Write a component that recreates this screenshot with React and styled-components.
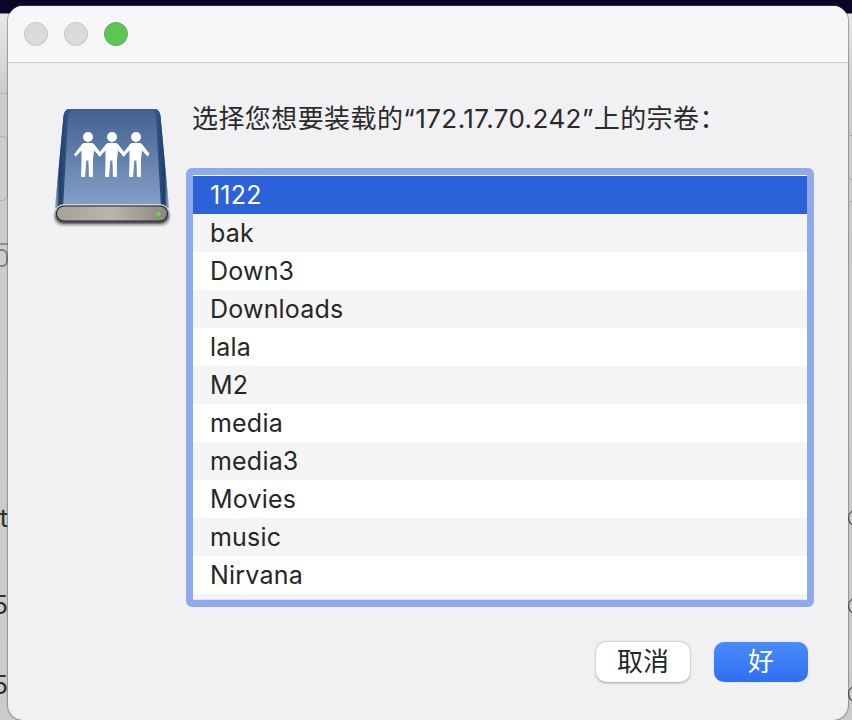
import React from 'react';
import styled, { createGlobalStyle } from 'styled-components';

const Global = createGlobalStyle`
  html, body { margin: 0; padding: 0; background: #cfcfcf; }
  * { box-sizing: border-box; }
`;

const Desktop = styled.div`
  width: 852px;
  height: 720px;
  overflow: hidden;
  display: flex;
  font-family: "Inter", "Noto Sans CJK SC", sans-serif;
  background: linear-gradient(180deg, #0a0628 0, #0a0628 13px, #e8e8e8 14px, #cdcdcd 90px, #cbcbcb 720px);
`;

const Strip = styled.aside`
  width: ${p => p.$w}px;
  flex: none;
  height: 720px;
  overflow: hidden;
  display: flex;
  flex-direction: column;
  align-items: ${p => (p.$right ? 'flex-start' : 'flex-end')};
`;

const BackRule = styled.div`
  flex: none;
  width: 100%;
  margin-top: ${p => p.$gap}px;
  height: ${p => p.$h || 1}px;
  background: ${p => p.$c || '#b3b3b3'};
`;

const BackBox = styled.div`
  flex: none;
  width: 20px;
  margin-top: ${p => p.$gap}px;
  height: ${p => p.$h}px;
  border: ${p => p.$b};
  border-radius: 6px;
`;

const BackGlyph = styled.span`
  flex: none;
  margin-top: ${p => p.$gap}px;
  font-size: 25px;
  line-height: 30px;
  color: #2c2c2c;
`;

const BackRing = styled.div`
  flex: none;
  width: 24px;
  height: 20px;
  margin-top: ${p => p.$gap}px;
  border: 1.5px solid #444;
  border-radius: 50%;
`;

const Sheet = styled.main`
  width: 840px;
  height: 714px;
  flex: none;
  margin-top: 6px;
  background: #f1f0f2;
  border-radius: 15px;
  box-shadow: 0 0 1px 1px rgba(90, 90, 90, 0.5);
  display: flex;
  flex-direction: column;
  overflow: hidden;
`;

const TitleBar = styled.header`
  height: 57px;
  flex: none;
  display: flex;
  align-items: center;
  gap: 16px;
  padding: 0 0 1px 16px;
  background: #f7f6f8;
  border-bottom: 1.5px solid #cfcdd0;
`;

const Light = styled.span`
  width: 24px;
  height: 24px;
  border-radius: 50%;
  background: ${p => (p.$on ? '#5fc454' : '#dcdbdc')};
  border: 1px solid ${p => (p.$on ? '#55b44b' : '#c4c3c5')};
`;

const Body = styled.div`
  flex: 1;
  display: flex;
  align-items: flex-start;
`;

const IconColumn = styled.div`
  width: 178px;
  flex: none;
  padding: 42px 0 0 44px;
`;

const Main = styled.div`
  width: 628px;
  display: flex;
  flex-direction: column;
`;

const Prompt = styled.h1`
  margin: 0;
  padding: 40px 0 0 6px;
  height: 105px;
  font-size: 26px;
  line-height: 32px;
  letter-spacing: 0.42px;
  font-weight: 400;
  color: #2a2a2a;
  white-space: nowrap;
`;

const ListFrame = styled.div`
  height: 439px;
  border: 7px solid #8ea9ec;
  border-radius: 6px;
  background: #fff;
  overflow: hidden;
`;

const ListInner = styled.ul`
  margin: 0;
  padding: 1px 0 0;
  list-style: none;
  height: 425px;
  background: #fff;
  overflow: hidden;
  border-bottom: 1px solid #dfe6f7;
`;

const Row = styled.li`
  height: 38px;
  padding-left: 17px;
  font-size: 25px;
  letter-spacing: 0.2px;
  line-height: 38px;
  color: ${p => (p.$selected ? '#fff' : '#262626')};
  background: ${p => (p.$selected ? '#2b62d9' : p.$odd ? '#f4f5f4' : '#fff')};
`;

const Footer = styled.div`
  display: flex;
  justify-content: flex-end;
  gap: 24px;
  padding: 35px 6px 0 0;
`;

const Button = styled.button`
  width: 94px;
  height: 40px;
  padding: 0;
  border: none;
  border-radius: 10px;
  font-family: inherit;
  font-size: 26px;
  line-height: 38px;
  color: ${p => (p.$primary ? '#fff' : '#262626')};
  background: ${p => (p.$primary ? 'linear-gradient(180deg, #4a8cfb, #2f6ef0)' : '#fff')};
  box-shadow: ${p => (p.$primary ? '0 0 1px rgba(40,90,200,.4)' : '0 0.5px 2.5px rgba(0,0,0,.35)')};
`;

const personPath =
  'M82.5 143.500 Q88 142 93.500 143.500 L101.500 153.800 L99.800 156.800 L94 150.500 L93 160 L92.800 177 L89 177 L88.400 160.500 L86.400 160.500 L85 177 L81 177 L81.500 160 L81.400 150.500 L75.600 156.800 L74 154.400 Z';

const DriveIcon = () => (
  <svg width="124" height="124" viewBox="52 105 124 124" aria-hidden="true">
    <defs>
      <linearGradient id="face" x1="0" y1="0" x2="0" y2="1">
        <stop offset="0" stopColor="#41608f" />
        <stop offset="1" stopColor="#86a1ca" />
      </linearGradient>
      <linearGradient id="leftSide" x1="0" y1="0" x2="1" y2="0">
        <stop offset="0" stopColor="#b9c5d8" />
        <stop offset="0.25" stopColor="#1f3e6c" />
        <stop offset="1" stopColor="#3f5f8e" />
      </linearGradient>
      <linearGradient id="rightSide" x1="0" y1="0" x2="1" y2="0">
        <stop offset="0" stopColor="#3f5f8e" />
        <stop offset="0.75" stopColor="#1f3e6c" />
        <stop offset="1" stopColor="#b9c5d8" />
      </linearGradient>
      <linearGradient id="plate" x1="0" y1="0" x2="1" y2="0">
        <stop offset="0" stopColor="#a5a298" />
        <stop offset="0.5" stopColor="#bab6ab" />
        <stop offset="1" stopColor="#8a877f" />
      </linearGradient>
      <linearGradient id="rim" x1="0" y1="0" x2="0" y2="1">
        <stop offset="0" stopColor="#d3d6dc" />
        <stop offset="1" stopColor="#4c4f55" />
      </linearGradient>
      <filter id="soft" x="-10%" y="-10%" width="120%" height="120%">
        <feGaussianBlur stdDeviation="0.4" />
      </filter>
      <filter id="drop" x="-10%" y="-50%" width="120%" height="200%">
        <feGaussianBlur stdDeviation="1.200" />
      </filter>
    </defs>
    <rect x="54" y="208" width="116" height="17.500" rx="9" fill="#000" opacity="0.35" filter="url(#drop)" />
    <g filter="url(#soft)">
      <path d="M72 109 H152 Q159.500 109 160.500 116 L169 208 H55 L63.500 116 Q64.500 109 72 109 Z" fill="url(#face)" />
      <path d="M72 109 H68 Q64.500 110 63.500 116 L55 208 H63 L68 118 Q69 111 72 109 Z" fill="url(#leftSide)" />
      <path d="M152 109 H156 Q159.500 110 160.500 116 L169 208 H161 L156 118 Q155 111 152 109 Z" fill="url(#rightSide)" />
      <rect x="54.500" y="204" width="115" height="19.500" rx="9.500" fill="url(#rim)" />
      <rect x="56.500" y="206" width="111" height="15" rx="7.500" fill="url(#plate)" stroke="#1f2124" strokeWidth="1.100" />
      <circle cx="158.500" cy="214" r="2.200" fill="#68d64e" />
      <g fill="#fff">
        <circle cx="88" cy="137" r="5" />
        <circle cx="112" cy="137" r="5" />
        <circle cx="136" cy="137" r="5" />
        <path d={personPath} />
        <path d={personPath} transform="translate(24 0)" />
        <path d={personPath} transform="translate(48 0)" />
      </g>
    </g>
  </svg>
);

const volumes = ['1122', 'bak', 'Down3', 'Downloads', 'lala', 'M2', 'media', 'media3', 'Movies', 'music', 'Nirvana', ''];

export default function App() {
  return (
    <Desktop>
      <Global />
      <Strip $w={8}>
        <BackRule $gap={93} />
        <BackBox $gap={42} $h={65} $b="1px solid #b0b0b0" />
        <BackRule $gap={42} $h={2} $c="#8f8f8f" />
        <BackBox $gap={4} $h={18} $b="2px solid #7f7f7f" />
        <BackGlyph $gap={236}>t</BackGlyph>
        <BackGlyph $gap={57}>5</BackGlyph>
        <BackGlyph $gap={50}>5</BackGlyph>
      </Strip>
      <Sheet>
        <TitleBar>
          <Light />
          <Light />
          <Light $on />
        </TitleBar>
        <Body>
          <IconColumn>
            <DriveIcon />
          </IconColumn>
          <Main>
            <Prompt>选择您想要装载的“172.17.70.242”上的宗卷：</Prompt>
            <ListFrame>
              <ListInner>
                {volumes.map((v, i) => (
                  <Row key={i} $selected={i === 0} $odd={i % 2 === 1}>{v}</Row>
                ))}
              </ListInner>
            </ListFrame>
            <Footer>
              <Button>取消</Button>
              <Button $primary>好</Button>
            </Footer>
          </Main>
        </Body>
      </Sheet>
      <Strip $w={4} $right>
        <BackRule $gap={135} $c="#a9a9a9" />
        <BackRule $gap={43} $c="#a9a9a9" />
        <BackRule $gap={21} $c="#a9a9a9" />
        <BackRing $gap={306} />
        <BackRing $gap={68} />
        <BackRing $gap={68} />
      </Strip>
    </Desktop>
  );
}
